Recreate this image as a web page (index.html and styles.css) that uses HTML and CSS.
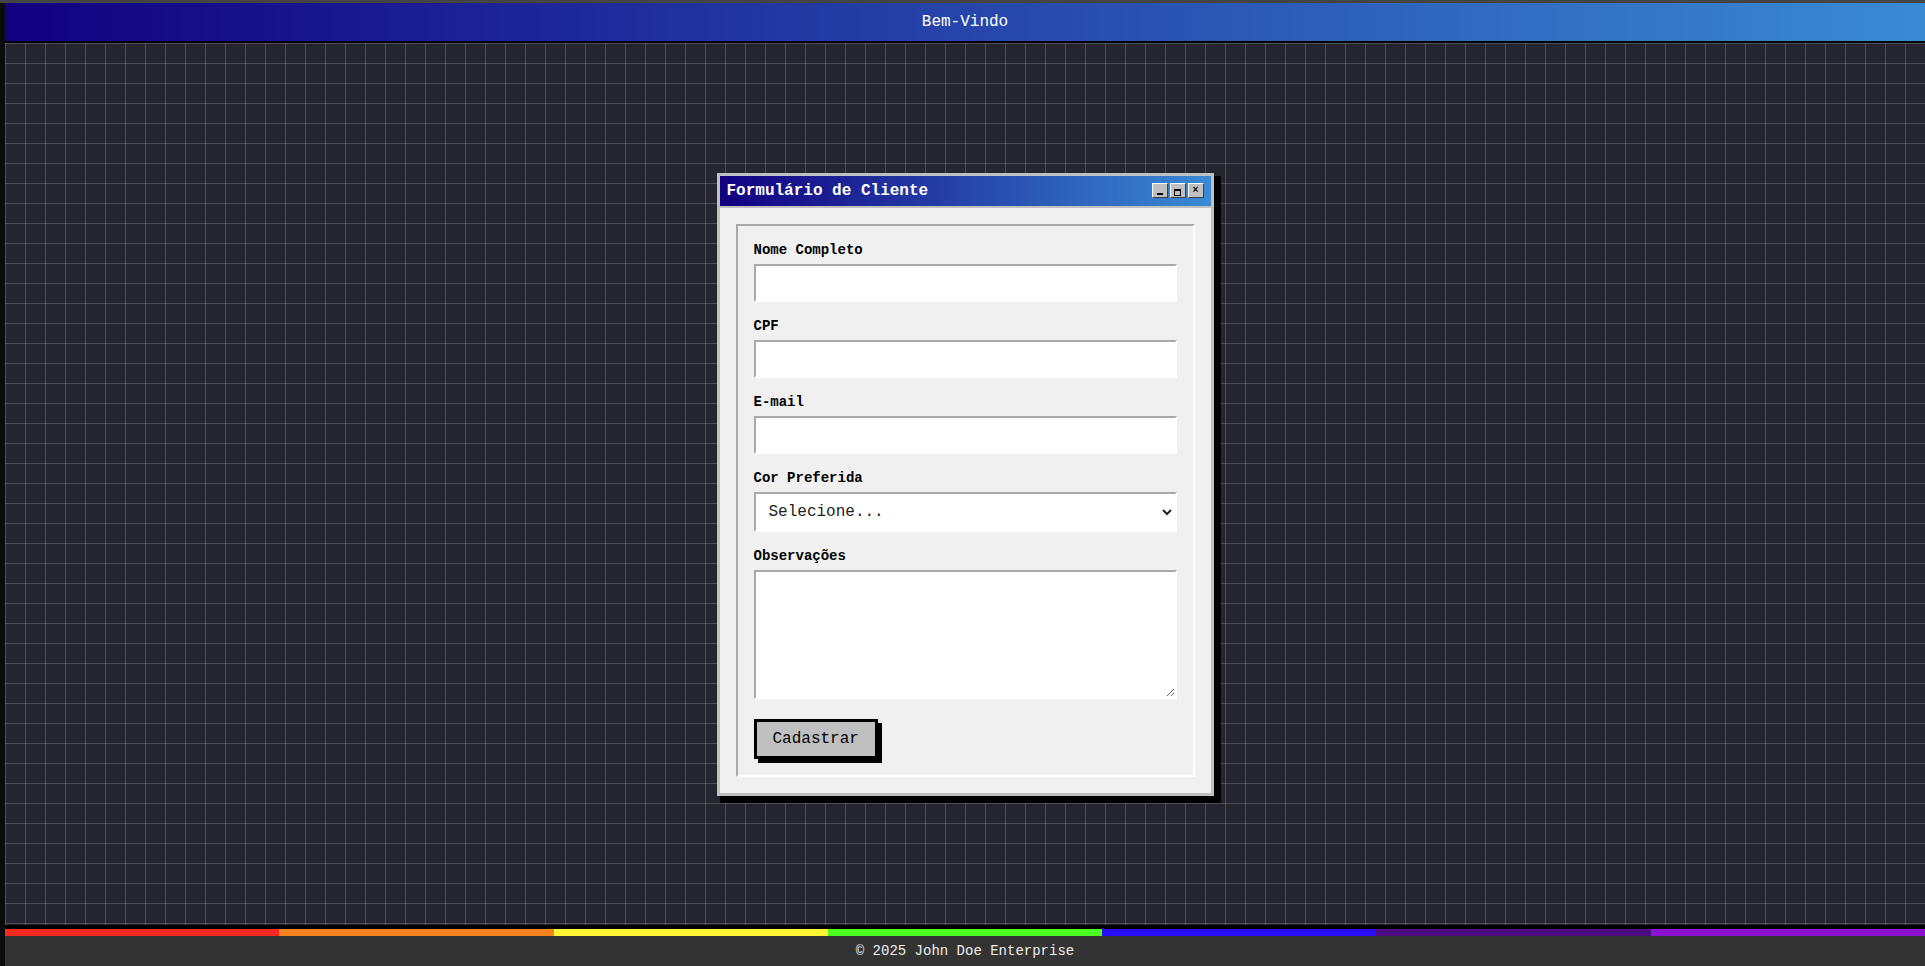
FILE: index.html
```html
<!DOCTYPE html>
<html lang="pt-BR">
<head>
<meta charset="utf-8">
<title>Bem-Vindo</title>
<link rel="stylesheet" href="styles.css">
</head>
<body>
<div class="page">
  <header class="topbar">Bem-Vindo</header>
  <main class="desk">
    <div class="window">
      <div class="titlebar">
        <span class="title">Formulário de Cliente</span>
        <div class="controls">
          <button class="ctl ctl-min" type="button" aria-label="Minimizar"><span class="min-bar"></span></button>
          <button class="ctl ctl-max" type="button" aria-label="Maximizar"><span class="max-box"></span></button>
          <button class="ctl ctl-close" type="button" aria-label="Fechar">×</button>
        </div>
      </div>
      <div class="window-body">
        <form class="form">
          <fieldset class="fs">
            <div class="group">
              <label for="nome">Nome Completo</label>
              <input id="nome" type="text">
            </div>
            <div class="group">
              <label for="cpf">CPF</label>
              <input id="cpf" type="text">
            </div>
            <div class="group">
              <label for="email">E-mail</label>
              <input id="email" type="email">
            </div>
            <div class="group">
              <label for="cor">Cor Preferida</label>
              <select id="cor">
                <option>Selecione...</option>
                <option>Vermelho</option>
                <option>Verde</option>
                <option>Azul</option>
              </select>
            </div>
            <div class="group group-last">
              <label for="obs">Observações</label>
              <textarea id="obs"></textarea>
            </div>
            <button class="submit" type="submit">Cadastrar</button>
          </fieldset>
        </form>
      </div>
    </div>
  </main>
  <div class="rainbow">
    <span class="r1"></span><span class="r2"></span><span class="r3"></span><span class="r4"></span><span class="r5"></span><span class="r6"></span><span class="r7"></span>
  </div>
  <footer class="footer">© 2025 John Doe Enterprise</footer>
</div>
</body>
</html>
```
FILE: styles.css
```css
html, body {
  margin: 0;
  height: 100%;
}

body {
  box-sizing: border-box;
  background: #0b0b0b;
  border-top: 3px solid #444;
  padding-left: 5px;
  font-family: "Liberation Mono", "Courier New", monospace;
  color: #000;
}

.page {
  display: flex;
  flex-direction: column;
  height: 100%;
}

.topbar {
  flex: none;
  height: 38px;
  border-bottom: 2px solid #000;
  background: linear-gradient(to right, #120080, #3a8ad4);
  color: #fff;
  font-size: 16px;
  display: flex;
  align-items: center;
  justify-content: center;
}

.desk {
  flex: 1;
  min-height: 0;
  border-bottom: 4px solid #000;
  background-color: #24252f;
  background-image:
    linear-gradient(rgba(255, 255, 255, 0.18) 1px, transparent 1px),
    linear-gradient(90deg, rgba(255, 255, 255, 0.18) 1px, transparent 1px);
  background-size: 20px 20px;
  display: flex;
  align-items: center;
  justify-content: center;
}

.window {
  width: 491px;
  border: 3px solid #c0c0c0;
  background: #f0f0f0;
  box-shadow: 5px 5px 0 2px #000;
}

.titlebar {
  height: 30px;
  border-bottom: 2px solid #c0c0c0;
  background: linear-gradient(to right, #120080, #3a8ad4);
  padding: 0 7px;
  display: flex;
  align-items: center;
  justify-content: space-between;
}

.title {
  color: #fff;
  font-weight: bold;
  font-size: 16px;
}

.controls {
  display: flex;
  gap: 2px;
}

.ctl {
  box-sizing: border-box;
  width: 16px;
  height: 15px;
  padding: 0;
  background: #c0c0c0;
  border: 1px solid;
  border-color: #fff #404040 #404040 #fff;
  color: #000;
  font-family: "Liberation Mono", monospace;
  font-size: 10px;
  font-weight: bold;
  line-height: 11px;
  display: flex;
  align-items: center;
  justify-content: center;
}

.min-bar {
  width: 6px;
  height: 2px;
  background: #000;
  margin-top: 6px;
}

.max-box {
  width: 5px;
  height: 4px;
  border: 1px solid #000;
  border-top-width: 2px;
  margin-top: 3px;
}

.window-body {
  padding: 16px;
}

.form {
  margin: 0;
}

.fs {
  margin: 0;
  min-width: 0;
  padding: 16px;
  border: 2px solid;
  border-color: #a9a9a9 #fff #fff #a9a9a9;
}

.group {
  margin-bottom: 16px;
}

.group-last {
  margin-bottom: 20px;
}

label {
  display: block;
  font-size: 14px;
  font-weight: bold;
  line-height: 16px;
  margin-bottom: 6px;
  color: #000;
}

input,
select,
textarea {
  display: block;
  width: 100%;
  box-sizing: border-box;
  margin: 0;
  border: 2px solid;
  border-color: #a9a9a9 #fff #fff #a9a9a9;
  background: #fff;
  font-family: "Liberation Mono", "Courier New", monospace;
  font-size: 16px;
  color: #222;
  padding: 8px 10px;
  border-radius: 0;
  outline: none;
}

input {
  height: 38px;
}

select {
  height: 40px;
  padding: 8px 9px;
}

textarea {
  height: 129px;
}

.submit {
  display: block;
  box-sizing: border-box;
  height: 40px;
  padding: 0 16px;
  border: 3px solid #000;
  background: #c0c0c0;
  box-shadow: 4px 4px 0 #000;
  font-family: "Liberation Mono", "Courier New", monospace;
  font-size: 16px;
  color: #000;
}

.rainbow {
  flex: none;
  height: 7px;
  display: flex;
}

.rainbow span {
  flex: 1;
}

.r1 { background: #f5291f; }
.r2 { background: #f7831f; }
.r3 { background: #fff533; }
.r4 { background: #4aff1f; }
.r5 { background: #2a0cfa; }
.r6 { background: #4b0a82; }
.r7 { background: #8c12d2; }

.footer {
  flex: none;
  height: 30px;
  background: #333;
  color: #eee;
  font-size: 14px;
  display: flex;
  align-items: center;
  justify-content: center;
}
```
